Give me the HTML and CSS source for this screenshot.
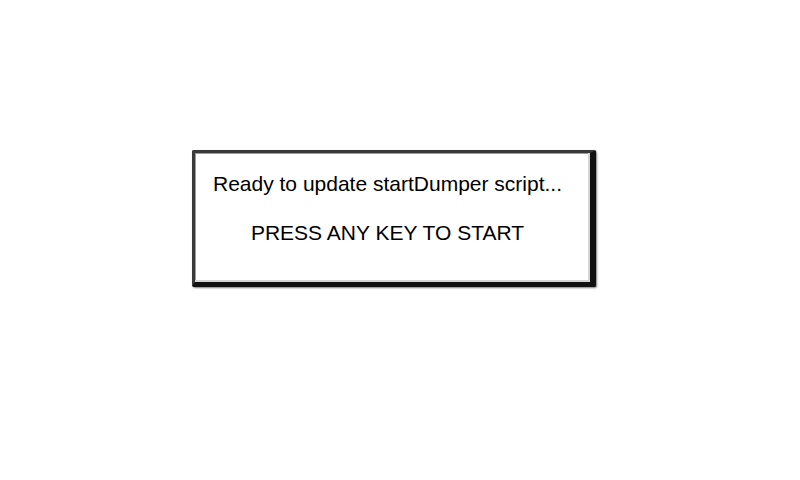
FILE: index.html
```html
<!DOCTYPE html>
<html>
<head>
<meta charset="utf-8">
<link rel="stylesheet" href="styles.css">
</head>
<body>
<div class="screen">
  <div class="dialog">
    <p class="status">Ready to update startDumper script...</p>
    <p class="prompt">PRESS ANY KEY TO START</p>
  </div>
</div>
</body>
</html>
```
FILE: styles.css
```css
html, body {
  margin: 0;
  padding: 0;
  background: #fff;
}

.screen {
  width: 800px;
  height: 480px;
  box-sizing: border-box;
  padding: 150px 0 0 192px;
  font-family: "Liberation Sans", Arial, sans-serif;
}

.dialog {
  width: 404px;
  height: 137px;
  box-sizing: border-box;
  background: #fff;
  border-style: solid;
  border-width: 3px 6px 5px 3px;
  border-color: #3a3a3a #111 #111 #3a3a3a;
  box-shadow:
    inset -2px -2px 0 #d4d4d4,
    inset 1px 1px 0 #9a9a9a,
    1px 1px 2px rgba(0, 0, 0, 0.5);
  border-radius: 2px;
  display: flex;
  flex-direction: column;
  align-items: center;
  padding: 19px 10px 0 0;
  color: #000;
}

.status {
  margin: 0;
  font-size: 21px;
  line-height: 24px;
}

.prompt {
  margin: 25px 0 0;
  font-size: 21px;
  line-height: 24px;
}
```
